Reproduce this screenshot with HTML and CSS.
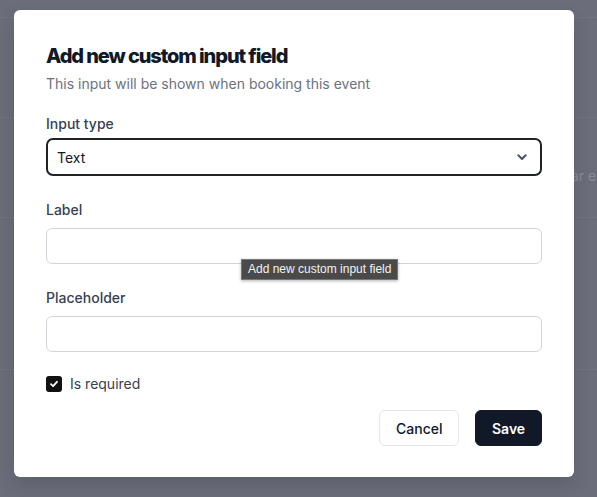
FILE: index.html
```html
<!DOCTYPE html>
<html lang="en">
<head>
<meta charset="utf-8">
<title>Add new custom input field</title>
<link rel="stylesheet" href="styles.css">
</head>
<body>
<div class="backdrop">
  <div class="bg-line l1"></div>
  <div class="bg-line l2"></div>
  <div class="bg-line l3"></div>
  <div class="bg-line l4"></div>
  <span class="bg-text">Add to calendar e</span>
</div>
<div class="modal">
  <h1 class="title">Add new custom input field</h1>
  <p class="subtitle">This input will be shown when booking this event</p>

  <div class="group group-first">
    <label class="label label-tight">Input type</label>
    <div class="select">
      <span>Text</span>
      <svg class="chevron" width="12" height="12" viewBox="0 0 12 12"><path d="M2.3 4.3 L6 8 L9.7 4.3" fill="none" stroke="#4b5563" stroke-width="2" stroke-linecap="round" stroke-linejoin="round"/></svg>
    </div>
  </div>

  <div class="group">
    <label class="label">Label</label>
    <div class="input"></div>
  </div>

  <div class="group">
    <label class="label">Placeholder</label>
    <div class="input"></div>
  </div>

  <div class="check-row">
    <span class="checkbox">
      <svg width="10" height="10" viewBox="0 0 10 10"><path d="M2 5.2 L4.1 7.2 L8 2.8" fill="none" stroke="#fff" stroke-width="1.8" stroke-linecap="round" stroke-linejoin="round"/></svg>
    </span>
    <span class="check-label">Is required</span>
  </div>

  <div class="actions">
    <button class="btn btn-secondary">Cancel</button>
    <button class="btn btn-primary">Save</button>
  </div>

  <div class="tooltip">Add new custom input field</div>
</div>
</body>
</html>
```
FILE: styles.css
```css
html, body {
  margin: 0;
  padding: 0;
  height: 100%;
}
body {
  background: #6b6e7a;
  font-family: Inter, "Liberation Sans", sans-serif;
  overflow: hidden;
  position: relative;
}
.backdrop {
  position: absolute;
  inset: 0;
}
.bg-line {
  position: absolute;
  left: 0;
  right: 0;
  height: 1px;
  background: #72757f;
}
.l1 { top: 17px; }
.l2 { top: 117px; }
.l3 { top: 217px; }
.l4 { top: 369px; }
.bg-text {
  position: absolute;
  top: 166px;
  left: 479px;
  font-size: 14px;
  line-height: 20px;
  color: #8a8d97;
  white-space: nowrap;
}
.modal {
  position: relative;
  margin: 10px 0 0 14px;
  width: 560px;
  height: 467px;
  box-sizing: border-box;
  background: #fff;
  border-radius: 6px;
  padding: 32px 32px 31px;
  box-shadow: 0 8px 18px rgba(30, 32, 40, 0.18);
  color: #111827;
}
.title {
  margin: 0;
  font-size: 20px;
  line-height: 28px;
  font-weight: 800;
  letter-spacing: -1.1px;
  color: #111827;
}
.subtitle {
  margin: 4px 0 0;
  font-size: 14px;
  line-height: 20px;
  color: #6b7280;
}
.group {
  margin-top: 24px;
  display: flex;
  flex-direction: column;
}
.group-first {
  margin-top: 20px;
}
.label {
  font-size: 14px;
  line-height: 20px;
  font-weight: 500;
  color: #374151;
  margin-bottom: 8px;
}
.label-tight {
  margin-bottom: 4px;
}
.select {
  height: 38px;
  box-sizing: border-box;
  border: 2px solid #1f2328;
  border-radius: 7px;
  display: flex;
  align-items: center;
  justify-content: space-between;
  padding: 0 12px 0 9px;
  font-size: 14px;
  color: #111827;
}
.chevron {
  display: block;
}
.input {
  height: 36px;
  box-sizing: border-box;
  border: 1px solid #d1d5db;
  border-radius: 6px;
}
.check-row {
  margin-top: 22px;
  display: flex;
  align-items: center;
  gap: 8px;
  height: 20px;
}
.checkbox {
  width: 16px;
  height: 16px;
  border-radius: 3px;
  background: #111111;
  display: flex;
  align-items: center;
  justify-content: center;
}
.checkbox svg { display: block; }
.check-label {
  font-size: 14px;
  line-height: 20px;
  color: #374151;
}
.actions {
  margin-top: 16px;
  display: flex;
  justify-content: flex-end;
  gap: 16px;
}
.btn {
  height: 36px;
  box-sizing: border-box;
  border-radius: 6px;
  font-family: Inter, "Liberation Sans", sans-serif;
  font-size: 14px;
  font-weight: 500;
  padding: 0 16px;
  cursor: pointer;
}
.btn-secondary {
  width: 80px;
  background: #fff;
  border: 1px solid #e5e7eb;
  color: #111827;
}
.btn-primary {
  width: 67px;
  background: #111827;
  border: 1px solid #111827;
  color: #fff;
  font-weight: 600;
}
.tooltip {
  position: absolute;
  left: 227px;
  top: 249px;
  height: 21px;
  box-sizing: border-box;
  padding: 0 6px;
  background: #4a4a4a;
  border: 1px solid #767676;
  color: #f2f2f2;
  font-family: "Liberation Sans", Arial, sans-serif;
  font-size: 12px;
  line-height: 19px;
  white-space: nowrap;
  box-shadow: 0 1px 3px rgba(0,0,0,0.3);
}
```
